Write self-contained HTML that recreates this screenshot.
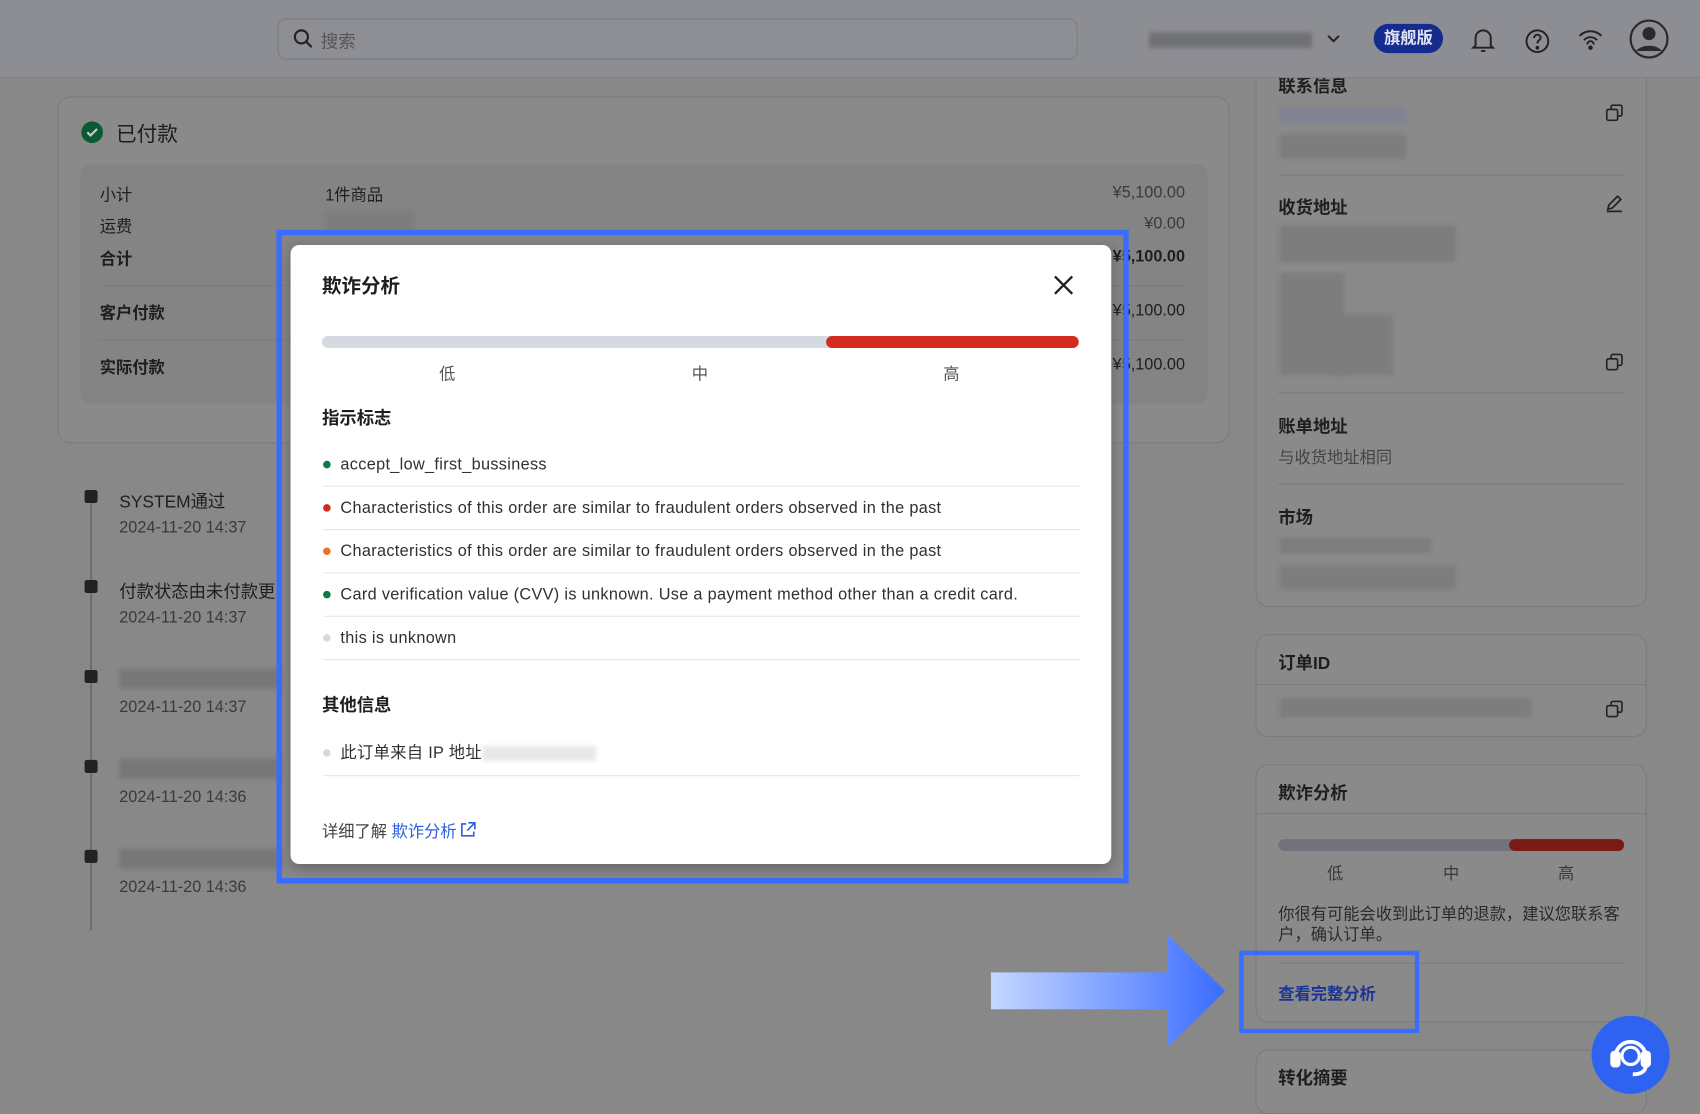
<!DOCTYPE html>
<html><head><meta charset="utf-8"><style>
*{margin:0;padding:0;box-sizing:border-box}
html,body{width:1700px;height:1096px;overflow:hidden;background:#888888}
#w{position:absolute;left:0;top:0;width:1568px;height:1011px;transform:scale(1.08418,1.08407);transform-origin:0 0;font-family:"Liberation Sans","Noto Sans CJK SC",sans-serif;color:#1e1e1e;background:#888}
.a{position:absolute}
.blur{position:absolute;background:#7d7d7d;filter:blur(2px)}
.card{position:absolute;border:1px solid #7b7b7b;border-radius:12px;background:#8a8a8a}
.t{position:absolute;font-size:16px;color:#1e1e1e;white-space:nowrap}
.g{color:#3a3a3a}
.r{text-align:right;width:200px}
.sep{position:absolute;height:1px;background:#7c7c7c}
.li{position:absolute;left:30px;width:698px;height:40px;border-bottom:1px solid #e6e6e6;font-size:15px;letter-spacing:.3px;color:#303030;line-height:40px;padding-left:16px}
.li i{position:absolute;left:0;top:16px;width:7px;height:7px;border-radius:50%}
</style></head><body><div id="w">

<!-- left paid card -->
<div class="card" style="left:53px;top:89px;width:1081px;height:320px"></div>
<svg class="a" style="left:74px;top:111px" width="22" height="22" viewBox="0 0 22 22"><circle cx="11" cy="11" r="10" fill="#0a5a34"/><path d="M6.5 11l3 3 6-6" fill="none" stroke="#ccc" stroke-width="2"/></svg>
<div class="t" style="left:107px;top:109px;font-size:19px">已付款</div>
<div class="a" style="left:74px;top:151px;width:1040px;height:222px;background:#848484;border-radius:10px"></div>
<div class="t" style="left:92px;top:169px;font-size:15px">小计</div>
<div class="t" style="left:300px;top:169px;font-size:15px">1件商品</div>
<div class="t g r" style="left:893px;top:169px;font-size:15px">¥5,100.00</div>
<div class="t" style="left:92px;top:198px;font-size:15px">运费</div>
<div class="blur" style="left:300px;top:195px;width:82px;height:18px"></div>
<div class="t g r" style="left:893px;top:198px;font-size:15px">¥0.00</div>
<div class="t" style="left:92px;top:228px;font-size:15px;font-weight:bold">合计</div>
<div class="t r" style="left:893px;top:228px;font-size:15px;font-weight:bold">¥5,100.00</div>
<div class="sep" style="left:92px;top:263px;width:1000px"></div>
<div class="t" style="left:92px;top:278px;font-size:15px;font-weight:bold">客户付款</div>
<div class="t r" style="left:893px;top:278px;font-size:15px">¥5,100.00</div>
<div class="sep" style="left:92px;top:313px;width:1000px"></div>
<div class="t" style="left:92px;top:328px;font-size:15px;font-weight:bold">实际付款</div>
<div class="t r" style="left:893px;top:328px;font-size:15px">¥5,100.00</div>

<!-- timeline -->
<div class="a" style="left:83px;top:460px;width:2px;height:398px;background:#6e6e6e"></div>
<div class="a" style="left:78px;top:452px;width:12px;height:12px;background:#222;border-radius:2px"></div>
<div class="t" style="left:110px;top:449px">SYSTEM通过</div>
<div class="t g" style="left:110px;top:478px;font-size:15px">2024-11-20 14:37</div>
<div class="a" style="left:78px;top:535px;width:12px;height:12px;background:#222;border-radius:2px"></div>
<div class="t" style="left:110px;top:532px">付款状态由未付款更</div>
<div class="t g" style="left:110px;top:561px;font-size:15px">2024-11-20 14:37</div>
<div class="a" style="left:78px;top:618px;width:12px;height:12px;background:#222;border-radius:2px"></div>
<div class="blur" style="left:110px;top:617px;width:150px;height:18px;background:#777"></div>
<div class="t g" style="left:110px;top:644px;font-size:15px">2024-11-20 14:37</div>
<div class="a" style="left:78px;top:701px;width:12px;height:12px;background:#222;border-radius:2px"></div>
<div class="blur" style="left:110px;top:700px;width:150px;height:18px;background:#777"></div>
<div class="t g" style="left:110px;top:727px;font-size:15px">2024-11-20 14:36</div>
<div class="a" style="left:78px;top:784px;width:12px;height:12px;background:#222;border-radius:2px"></div>
<div class="blur" style="left:110px;top:783px;width:150px;height:18px;background:#777"></div>
<div class="t g" style="left:110px;top:810px;font-size:15px">2024-11-20 14:36</div>

<!-- right column -->
<div class="card" style="left:1158px;top:40px;width:361px;height:520px;border-top:none;border-radius:0 0 12px 12px"></div>
<div class="t" style="left:1179px;top:66px;font-weight:bold">联系信息</div>
<div class="blur" style="left:1180px;top:99px;width:117px;height:14px;background:#7f8394"></div>
<div class="blur" style="left:1180px;top:124px;width:117px;height:22px"></div>
<div class="sep" style="left:1179px;top:161px;width:320px"></div>
<div class="t" style="left:1179px;top:178px;font-weight:bold">收货地址</div>
<div class="blur" style="left:1180px;top:208px;width:163px;height:34px"></div>
<div class="blur" style="left:1180px;top:252px;width:60px;height:94px"></div>
<div class="blur" style="left:1230px;top:290px;width:55px;height:56px"></div>
<div class="sep" style="left:1179px;top:362px;width:320px"></div>
<div class="t" style="left:1179px;top:380px;font-weight:bold">账单地址</div>
<div class="t g" style="left:1179px;top:411px;font-size:15px;color:#444">与收货地址相同</div>
<div class="sep" style="left:1179px;top:446px;width:320px"></div>
<div class="t" style="left:1179px;top:464px;font-weight:bold">市场</div>
<div class="blur" style="left:1180px;top:496px;width:140px;height:14px"></div>
<div class="blur" style="left:1180px;top:522px;width:163px;height:22px"></div>
<svg class="a" style="left:1480px;top:178px" width="18" height="18" viewBox="0 0 18 18" fill="none" stroke="#222" stroke-width="1.6"><path d="M3 15l1-4 8-8 3 3-8 8zM2 17h14"/></svg>
<svg class="a" style="left:1481px;top:96px" width="16" height="16" viewBox="0 0 16 16" fill="none" stroke="#222" stroke-width="1.5"><rect x="1" y="5" width="10" height="10" rx="1.5"/><path d="M5 5V2.5A1.5 1.5 0 016.5 1h7A1.5 1.5 0 0115 2.5v7a1.5 1.5 0 01-1.5 1.5H11"/></svg>
<svg class="a" style="left:1481px;top:326px" width="16" height="16" viewBox="0 0 16 16" fill="none" stroke="#222" stroke-width="1.5"><rect x="1" y="5" width="10" height="10" rx="1.5"/><path d="M5 5V2.5A1.5 1.5 0 016.5 1h7A1.5 1.5 0 0115 2.5v7a1.5 1.5 0 01-1.5 1.5H11"/></svg>

<div class="card" style="left:1158px;top:585px;width:361px;height:95px"></div>
<div class="t" style="left:1179px;top:598px;font-weight:bold">订单ID</div>
<div class="sep" style="left:1159px;top:631px;width:359px"></div>
<div class="blur" style="left:1180px;top:644px;width:233px;height:18px"></div>
<svg class="a" style="left:1481px;top:646px" width="16" height="16" viewBox="0 0 16 16" fill="none" stroke="#222" stroke-width="1.5"><rect x="1" y="5" width="10" height="10" rx="1.5"/><path d="M5 5V2.5A1.5 1.5 0 016.5 1h7A1.5 1.5 0 0115 2.5v7a1.5 1.5 0 01-1.5 1.5H11"/></svg>

<div class="card" style="left:1158px;top:705px;width:361px;height:238px"></div>
<div class="t" style="left:1179px;top:718px;font-weight:bold">欺诈分析</div>
<div class="sep" style="left:1159px;top:750px;width:359px"></div>
<div class="a" style="left:1179px;top:774px;width:319px;height:11px;border-radius:6px;background:#72737a"></div>
<div class="a" style="left:1392px;top:774px;width:106px;height:11px;border-radius:6px;background:#7a1a14"></div>
<div class="t g" style="left:1224px;top:795px;font-size:15px">低</div>
<div class="t g" style="left:1331px;top:795px;font-size:15px">中</div>
<div class="t g" style="left:1437px;top:795px;font-size:15px">高</div>
<div class="a" style="left:1179px;top:834px;width:320px;font-size:15px;line-height:19px;color:#2a2a2a">你很有可能会收到此订单的退款，建议您联系客户，确认订单。</div>
<div class="sep" style="left:1179px;top:888px;width:320px"></div>
<div class="t" style="left:1179px;top:906px;font-size:15px;color:#1c3494;font-weight:bold">查看完整分析</div>
<div class="a" style="left:1143px;top:877px;width:166px;height:76px;border:4px solid #3a6cff"></div>
<svg class="a" style="left:912px;top:860px" width="220" height="108" viewBox="0 0 220 108"><defs><linearGradient id="gr" x1="0" x2="1"><stop offset="0" stop-color="#c5d8ff"/><stop offset="1" stop-color="#3a6cff"/></linearGradient></defs><path d="M2 37H165V2L218 54 165 106V71H2Z" fill="url(#gr)"/></svg>

<div class="card" style="left:1158px;top:968px;width:361px;height:60px"></div>
<div class="t" style="left:1179px;top:981px;font-weight:bold">转化摘要</div>
<div class="a" style="left:1468px;top:937px;width:72px;height:72px;border-radius:50%;background:#2d63f0"></div>
<svg class="a" style="left:1478px;top:947px" width="52" height="52" viewBox="0 0 52 52" fill="none" stroke="#fff" stroke-width="3.5"><path d="M12 28a14 14 0 0128 0"/><rect x="9" y="24" width="6" height="12" rx="2" fill="#fff"/><rect x="37" y="24" width="6" height="12" rx="2" fill="#fff"/><path d="M40 36c0 6-6 8-12 8"/><circle cx="26" cy="27" r="8" stroke-width="3"/></svg>

<!-- top bar -->
<div class="a" style="left:0;top:0;width:1568px;height:72px;background:#8d8e93;border-bottom:1px solid #808085"></div>
<div class="a" style="left:256px;top:17px;width:738px;height:38px;border:1px solid #7c7d82;border-radius:8px;background:#8e8f94"></div>
<svg class="a" style="left:270px;top:26px" width="20" height="20" viewBox="0 0 20 20" fill="none" stroke="#222" stroke-width="2"><circle cx="8" cy="8" r="6"/><path d="M12.5 12.5l5 5"/></svg>
<div class="t" style="left:296px;top:25px;color:#555">搜索</div>
<div class="blur" style="left:1060px;top:30px;width:150px;height:14px;background:#6f7075"></div>
<svg class="a" style="left:1222px;top:28px" width="16" height="16" viewBox="0 0 16 16" fill="none" stroke="#222" stroke-width="1.8"><path d="M3 5l5 5 5-5"/></svg>
<div class="a" style="left:1267px;top:22px;width:64px;height:27px;border-radius:14px;background:#152c8e;color:#dfe3f5;font-size:15px;line-height:27px;text-align:center;font-weight:bold">旗舰版</div>
<svg class="a" style="left:1356px;top:24px" width="24" height="26" viewBox="0 0 24 26" fill="none" stroke="#222" stroke-width="1.8"><path d="M5 18V11a7 7 0 0114 0v7l2 2H3z"/><path d="M10 23h4"/></svg>
<svg class="a" style="left:1405px;top:25px" width="26" height="26" viewBox="0 0 26 26" fill="none" stroke="#222" stroke-width="1.8"><circle cx="13" cy="13" r="10"/><path d="M10 10a3 3 0 116 0c0 2-3 2-3 5"/><circle cx="13" cy="19" r=".8" fill="#222"/></svg>
<svg class="a" style="left:1454px;top:26px" width="26" height="22" viewBox="0 0 26 22" fill="none" stroke="#222" stroke-width="1.8"><path d="M3 7a14 14 0 0120 0M7 11a8 8 0 0112 0M10 15a3 3 0 016 0"/><circle cx="13" cy="18" r="1.2" fill="#222"/></svg>
<svg class="a" style="left:1503px;top:18px" width="36" height="36" viewBox="0 0 36 36"><circle cx="18" cy="18" r="17" fill="none" stroke="#2a2a2e" stroke-width="2"/><circle cx="18" cy="13" r="6" fill="#2a2a2e"/><path d="M6 29a14 10 0 0124 0" fill="#2a2a2e"/></svg>
<div class="t" style="left:1179px;top:66px;font-weight:bold;height:6px;overflow:hidden"></div>

<!-- modal -->
<div class="a" style="left:255px;top:212px;width:786px;height:603px;border:5px solid #3a6cff"></div>
<div class="a" style="left:268px;top:226px;width:757px;height:571px;background:#fff;border-radius:8px;box-shadow:0 4px 12px rgba(0,0,0,.25)">
 <div class="t" style="left:29px;top:24px;font-size:18px;font-weight:bold">欺诈分析</div>
 <svg class="a" style="left:703px;top:27px" width="20" height="20" viewBox="0 0 20 20" stroke="#222" stroke-width="2.2"><path d="M2 2l16 16M18 2L2 18"/></svg>
 <div class="a" style="left:29px;top:84px;width:698px;height:11px;border-radius:6px;background:#d5d9e2"></div>
 <div class="a" style="left:494px;top:84px;width:233px;height:11px;border-radius:6px;background:#d52b1e"></div>
 <div class="t" style="left:137px;top:108px;font-size:15px;color:#555">低</div>
 <div class="t" style="left:370px;top:108px;font-size:15px;color:#555">中</div>
 <div class="t" style="left:602px;top:108px;font-size:15px;color:#555">高</div>
 <div class="t" style="left:29px;top:146px;font-weight:bold">指示标志</div>
 <div class="li" style="top:183px"><i style="background:#0b7a45"></i>accept_low_first_bussiness</div>
 <div class="li" style="top:223px"><i style="background:#d52b1e"></i>Characteristics of this order are similar to fraudulent orders observed in the past</div>
 <div class="li" style="top:263px"><i style="background:#e8722a"></i>Characteristics of this order are similar to fraudulent orders observed in the past</div>
 <div class="li" style="top:303px"><i style="background:#0b7a45"></i>Card verification value (CVV) is unknown. Use a payment method other than a credit card.</div>
 <div class="li" style="top:343px"><i style="background:#d5d9e2"></i>this is unknown</div>
 <div class="t" style="left:29px;top:411px;font-weight:bold">其他信息</div>
 <div class="li" style="top:449px;height:41px"><i style="background:#d5d9e2"></i>此订单来自 IP 地址<span style="display:inline-block;width:105px;height:14px;background:#e8e8e8;filter:blur(2px);vertical-align:middle"></span></div>
 <div class="t" style="left:29px;top:530px;font-size:15px;color:#444">详细了解 <span style="color:#2c5fe0">欺诈分析</span></div>
 <svg class="a" style="left:156px;top:532px" width="15" height="15" viewBox="0 0 15 15" fill="none" stroke="#2c5fe0" stroke-width="1.5"><path d="M6 2H2v11h11V9M8 1h6v6M14 1L7 8"/></svg>
</div>
</div></body></html>
